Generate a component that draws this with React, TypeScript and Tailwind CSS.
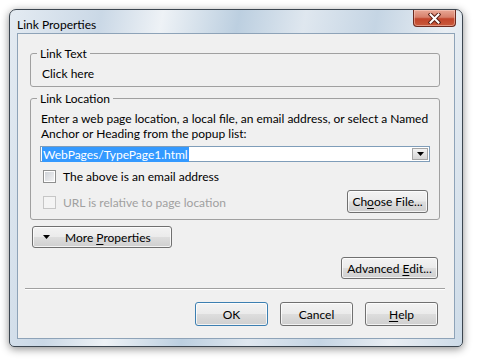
import React from "react";

const btn =
  "flex items-center justify-center rounded-[3px] border bg-[linear-gradient(#f3f3f3_0%,#ebebeb_48%,#dddddd_52%,#cfcfcf_100%)] shadow-[inset_0_0_0_1px_rgba(255,255,255,0.75)] text-[12px] leading-[15px] text-black";

function Button({ children, className, primary }: { children: React.ReactNode; className?: string; primary?: boolean }) {
  return (
    <div
      className={`${btn} ${
        primary
          ? "border-[#3c7fb1] bg-[linear-gradient(#eaf6fd_0%,#d9f0fc_48%,#bee6fd_52%,#a7d9f5_100%)] shadow-[inset_0_0_0_1px_rgba(255,255,255,0.6)]"
          : "border-[#707070]"
      } ${className ?? ""}`}
    >
      {children}
    </div>
  );
}

function Checkbox({ disabled }: { disabled?: boolean }) {
  return (
    <div
      className={`h-[13px] w-[13px] border ${
        disabled
          ? "border-[#c6c6c6] bg-[#f4f4f4]"
          : "border-[#8e8f8f] bg-[linear-gradient(135deg,#cbcfd5,#f6f6f6)] shadow-[inset_0_0_0_1px_#ffffff]"
      }`}
    />
  );
}

export default function App() {
  return (
    <div className="h-[361px] w-[478px] bg-white p-[9px] font-['Segoe_UI',Lato,'Noto_Sans',sans-serif] text-[12px] leading-[15px] text-black">
      <div className="flex h-[338px] w-[454px] flex-col rounded-t-[7px] rounded-b-[5px] border border-[#3c4650] bg-[linear-gradient(100deg,#e4ebf2_0%,#cad8e6_18%,#eef2f6_30%,#bccfe0_45%,#dfe7ef_58%,#c5d5e4_72%,#e9eef3_86%,#cddbe8_100%)] px-[7px] pb-[7px] shadow-[0_2px_9px_rgba(0,0,0,0.45)]">
        {/* title bar */}
        <div className="flex h-[26px] items-start justify-between">
          <div className="pt-[7px] text-[12px] leading-[15px] text-black">Link Properties</div>
          <div className="mr-[-1px] flex h-[17px] w-[43px] items-center justify-center rounded-b-[4px] border border-t-0 border-[#6b2a1f] bg-[linear-gradient(#e9a795_0%,#d7806b_45%,#c2452b_55%,#c95a3c_100%)] shadow-[inset_0_0_0_1px_rgba(255,220,210,0.45)]">
            <svg width="13" height="11" viewBox="0 0 13 11">
              <path d="M2.5 1.5 L10.5 9.5 M10.5 1.5 L2.5 9.5" stroke="#5a2017" strokeWidth="4" strokeLinecap="square" />
              <path d="M2.5 1.5 L10.5 9.5 M10.5 1.5 L2.5 9.5" stroke="#ffffff" strokeWidth="2" strokeLinecap="square" />
            </svg>
          </div>
        </div>

        {/* client */}
        <div className="flex flex-1 flex-col border border-[#8ea3b8] bg-[#f0f0f0] pl-[12px] pr-[14px] pt-[12px] pb-[12px]">
          <fieldset className="rounded-[3px] border border-[#a0a0a0] px-[10px] pb-[5px] pt-[5px]">
            <legend className="ml-[-4px] px-[3px]">Link Text</legend>
            <div className="pl-[1px]">Click here</div>
          </fieldset>

          <fieldset className="mt-[4px] rounded-[3px] border border-[#a0a0a0] pb-[6px] pl-[9px] pr-[11px] pt-[5px]">
            <legend className="ml-[-3px] px-[3px]">Link Location</legend>
            <div className="-mr-[10px] pl-[1px]">
              Enter a web page location, a local file, an email address, or select a Named Anchor or Heading from the popup list:
            </div>
            <div className="mr-[-2px] mt-[5px] flex h-[16px] items-center border border-[#7f9db9] bg-white pl-[1px] pr-[1px]">
              <div className="flex-1">
                <span className="bg-[#3399ff] px-[1px] text-white">WebPages/TypePage1.html</span>
              </div>
              <div className="flex h-[12px] w-[16px] items-center justify-center border border-[#a5a5a5] bg-[linear-gradient(#f2f2f2,#d6d6d6)]">
                <svg width="7" height="4" viewBox="0 0 7 4">
                  <path d="M0 0 H7 L3.5 4 Z" fill="#000" />
                </svg>
              </div>
            </div>
            <div className="mt-[7px] flex items-center gap-[7px] pl-[3px]">
              <Checkbox />
              <span>The above is an email address</span>
            </div>
            <div className="mt-[6px] flex items-center justify-between">
              <div className="flex items-center gap-[7px] pl-[3px] pt-[2px]">
                <Checkbox disabled />
                <span className="text-[#a0a0a0]">URL is relative to page location</span>
              </div>
              <Button className="h-[23px] w-[81px]">
                Ch<u className="underline-offset-2">o</u>ose File...
              </Button>
            </div>
          </fieldset>

          <div className="mt-[6px] flex">
            <Button className="ml-[2px] h-[22px] w-[140px] justify-start pl-[10px]">
              <svg width="7" height="4" viewBox="0 0 7 4" className="mr-[15px]">
                <path d="M0 0 H7 L3.5 4 Z" fill="#000" />
              </svg>
              More <u className="ml-[3px] underline-offset-2">P</u>roperties
            </Button>
          </div>

          <div className="mt-[9px] flex justify-end">
            <Button className="mr-[2px] h-[22px] w-[97px]">
              Advanced <u className="ml-[3px] underline-offset-2">E</u>dit...
            </Button>
          </div>

          <div className="-ml-[5px] -mr-[5px] mt-[9px] h-[2px] border-t border-[#a0a0a0] border-b border-b-white" />

          <div className="mt-[12px] flex justify-end gap-[12px] pr-[2px]">
            <Button primary className="h-[24px] w-[73px]">OK</Button>
            <Button className="h-[24px] w-[73px]">Cancel</Button>
            <Button className="h-[24px] w-[73px]">
              <u className="underline-offset-2">H</u>elp
            </Button>
          </div>
        </div>
      </div>
    </div>
  );
}
